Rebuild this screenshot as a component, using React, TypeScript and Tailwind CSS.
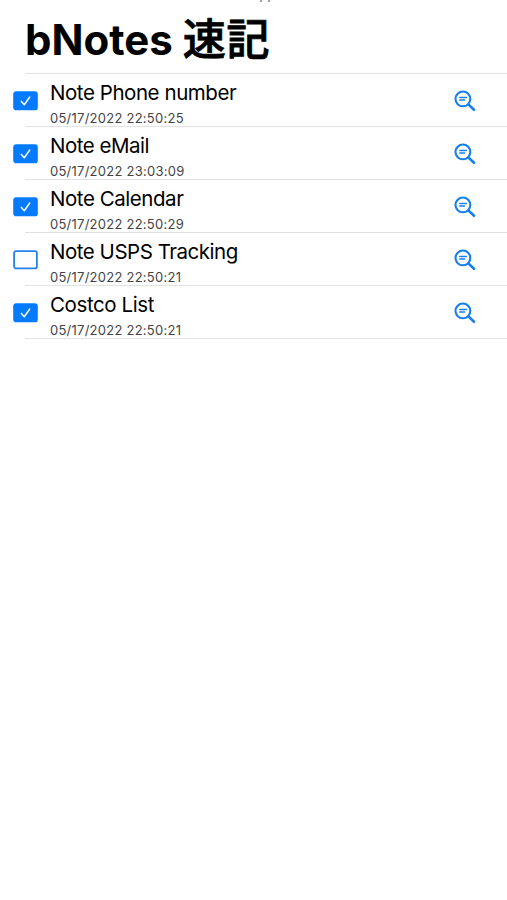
const notes = [
  { id: 1, title: 'Note Phone number', date: '05/17/2022 22:50:25', checked: true, titleClass: 'tracking-[-0.44px]' },
  { id: 2, title: 'Note eMail', date: '05/17/2022 23:03:09', checked: true, titleClass: 'tracking-[-0.5px]' },
  { id: 3, title: 'Note Calendar', date: '05/17/2022 22:50:29', checked: true, titleClass: 'tracking-[-0.45px]' },
  { id: 4, title: 'Note USPS Tracking', date: '05/17/2022 22:50:21', checked: false, titleClass: 'tracking-[-0.47px]' },
  { id: 5, title: 'Costco List', date: '05/17/2022 22:50:21', checked: true, titleClass: 'tracking-[-0.4px]' },
];

function Checkbox({ checked }: { checked: boolean }) {
  return (
    <svg width="26" height="20" viewBox="0 0 26 20" fill="none">
      <rect x="1.1" y="1.1" width="22.8" height="17.3" rx="2" fill={checked ? '#047bfe' : 'white'} stroke={checked ? '#047bfe' : '#2583ee'} strokeWidth="1.8" />
      {checked && <path d="M8.4 10.4l2.9 3.4 5.4-7.8" stroke="white" strokeWidth="1.5" strokeLinecap="round" strokeLinejoin="round" />}
    </svg>
  );
}

function NoteSearchIcon() {
  return (
    <svg width="22" height="22" viewBox="0 0 22 22" fill="none" stroke="#167ff0" strokeLinecap="round">
      <circle cx="8.9" cy="8.9" r="7.4" strokeWidth="2.1" />
      <path d="M14.6 14.6l5.4 5.2" strokeWidth="2.6" />
      <path d="M5.8 7.5h6.6M5.8 10.1h4.8" strokeWidth="1.5" />
    </svg>
  );
}

export default function App() {
  return (
    <div className="min-h-screen overflow-hidden bg-white font-[Inter,'Noto_Sans_CJK_JP',sans-serif] text-black">
      <div className="flex h-[2px] gap-[6px] pl-[260px]">
        <span className="h-[2px] w-[2px] bg-neutral-400" />
        <span className="h-[2px] w-[2px] bg-neutral-400" />
      </div>
      <h1 className="ml-[25px] h-[71px] whitespace-nowrap pt-[8px] text-[42px] font-bold leading-[60px]">
        bNotes <span className="text-[43px] font-medium leading-none tracking-[0.8px] [-webkit-text-stroke:0.8px_black]">速記</span>
      </h1>
      <ul>
        <li className="ml-[25px] h-px bg-[#e2e2e2]" />
        {notes.map((note) => (
          <li key={note.id} className="flex h-[53px]">
            <button className="flex w-[25px] shrink-0 items-start pl-[13px] pt-[17px]" aria-label="Toggle note">
              <span className="w-[26px] shrink-0">
                <Checkbox checked={note.checked} />
              </span>
            </button>
            <div className="flex flex-1 justify-between border-b border-[#e2e2e2] pl-[25px] pr-[31px]">
              <div className="whitespace-nowrap pt-[6px]">
                <p className={`text-[20.5px] leading-[26px] ${note.titleClass}`}>{note.title}</p>
                <p className="mt-[4px] text-[13px] leading-[16px] tracking-[0.25px] text-[#444]">{note.date}</p>
              </div>
              <button className="self-start pt-[16px]" aria-label="View note">
                <NoteSearchIcon />
              </button>
            </div>
          </li>
        ))}
      </ul>
    </div>
  );
}
